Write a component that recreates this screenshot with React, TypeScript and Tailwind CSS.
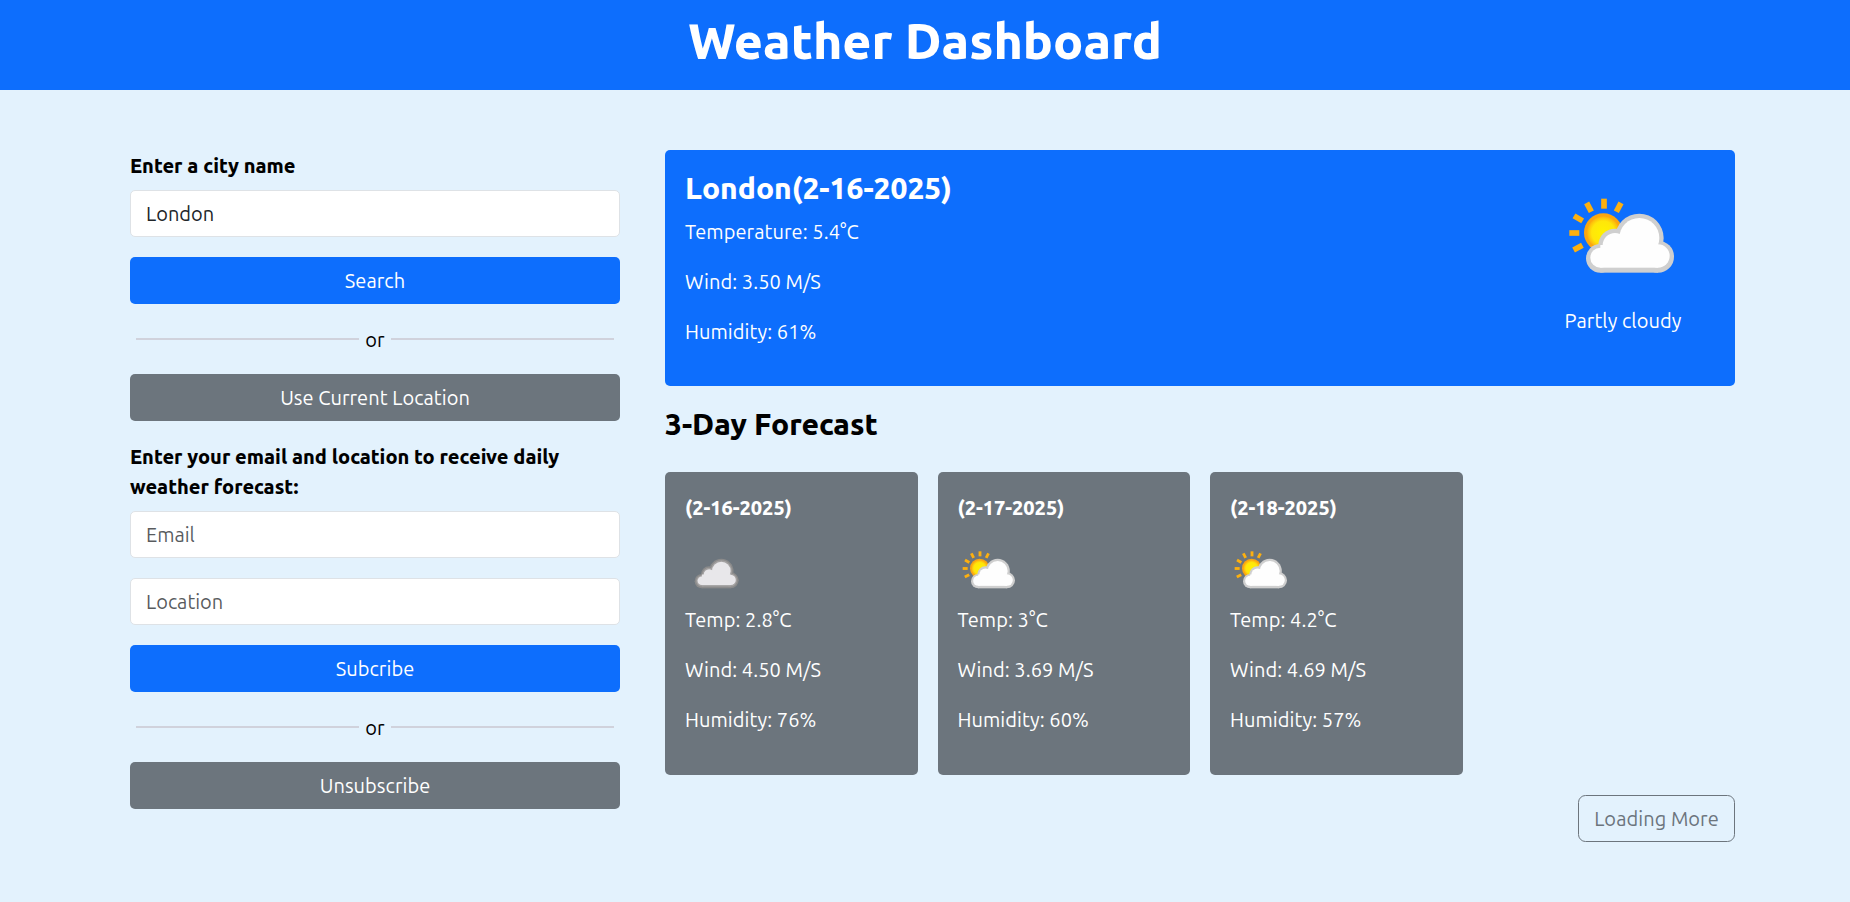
type Sky = "cloudy" | "partly";

function CloudShape({ inset, fill }: { inset: number; fill: string }) {
  const bottom = 248 - inset * 1.15;
  const lobe = 43 - inset;
  return (
    <g fill={fill}>
      <circle cx="121" cy={bottom - lobe} r={lobe} />
      <circle cx="165" cy="166" r={50 - inset} />
      <circle cx="238" cy="144" r={73 - inset} />
      <circle cx="294" cy={bottom - lobe - 5} r={lobe + 5} />
      <rect x="121" y="165" width="173" height={bottom - 165} />
    </g>
  );
}

const rays = [
  [132, 41, 0],
  [87, 52, -28],
  [176, 52, 28],
  [55, 85, -60],
  [43, 129, -90],
  [54, 173, -118],
];

function WeatherIcon({ sky, className }: { sky: Sky; className: string }) {
  return (
    <svg viewBox="0 -54 384 384" className={className} aria-hidden="true">
      {sky === "partly" ? (
        <>
          <defs>
            <radialGradient id="sun">
              <stop offset="0" stopColor="#fff200" />
              <stop offset="0.6" stopColor="#ffe60a" />
              <stop offset="0.78" stopColor="#fdc00d" />
              <stop offset="0.86" stopColor="#fba60f" />
              <stop offset="1" stopColor="#fba60f" />
            </radialGradient>
          </defs>
          <g fill="#fdb00f">
            {rays.map(([x, y, angle]) => (
              <rect key={angle} x={x - 8.5} y={y - 15} width="17" height="30" transform={`rotate(${angle} ${x} ${y})`} />
            ))}
          </g>
          <circle cx="130" cy="128" r="58" fill="url(#sun)" />
          <CloudShape inset={0} fill="#cfcfcf" />
          <CloudShape inset={13} fill="#fefefe" />
        </>
      ) : (
        <g transform="translate(-20 0)">
          <CloudShape inset={0} fill="#8b8b8b" />
          <CloudShape inset={9} fill="#a3a1a1" />
          <CloudShape inset={17} fill="#e8e7ea" />
        </g>
      )}
    </svg>
  );
}

function Button({ color, children }: { color: string; children: string }) {
  return <button className={`block h-[47px] w-full rounded-[5px] text-center leading-[30px] tracking-[0.05px] text-white ${color}`}>{children}</button>;
}

function Divider() {
  return (
    <div className="flex h-[70px] items-center px-[6px]">
      <div className="h-0.5 flex-1 bg-[#d0d2dc]" />
      <span className="px-[6px] pt-0.5">or</span>
      <div className="h-0.5 flex-1 bg-[#d0d2dc]" />
    </div>
  );
}

const inputClass =
  "block h-[47px] w-full rounded-[5px] border border-[#dee2e6] bg-white px-[15px] text-[#212529] placeholder:text-[#212529]/75 outline-none";

const forecast: { date: string; sky: Sky; temp: string; wind: string; humidity: string }[] = [
  { date: "2-16-2025", sky: "cloudy", temp: "2.8", wind: "4.50", humidity: "76" },
  { date: "2-17-2025", sky: "partly", temp: "3", wind: "3.69", humidity: "60" },
  { date: "2-18-2025", sky: "partly", temp: "4.2", wind: "4.69", humidity: "57" },
];

export default function App() {
  return (
    <div className="min-h-screen bg-[#e3f2fd] font-[Ubuntu,'Noto_Sans',sans-serif] text-[20px] leading-[30px] text-black">
      <header className="h-[90px] bg-[#0d6efd] pt-[10px] text-center text-white">
        <h1 className="text-[50px] leading-[60px] font-extrabold">Weather Dashboard</h1>
      </header>
      <main className="flex gap-[45px] pt-[60px] pr-[115px] pl-[130px]">
        <section className="w-[490px]">
          <label className="mb-[9px] block pt-px font-extrabold">Enter a city name</label>
          <input className={inputClass} defaultValue="London" />
          <div className="mt-5">
            <Button color="bg-[#0d6efd]">Search</Button>
          </div>
          <Divider />
          <Button color="bg-[#6c757d]">Use Current Location</Button>
          <label className="mt-5 mb-[9px] block pt-px font-extrabold">Enter your email and location to receive daily weather forecast:</label>
          <div className="flex flex-col gap-5">
            <input className={inputClass} placeholder="Email" />
            <input className={inputClass} placeholder="Location" />
            <Button color="bg-[#0d6efd]">Subcribe</Button>
          </div>
          <Divider />
          <Button color="bg-[#6c757d]">Unsubscribe</Button>
        </section>
        <section className="flex-1 tracking-[0.07px]">
          <div className="flex h-[236px] justify-between rounded-[5px] bg-[#0d6efd] p-5 text-white">
            <div>
              <h2 className="mb-[11px] text-[30px] leading-[36px] font-extrabold tracking-normal">London(2-16-2025)</h2>
              <p className="mb-5">Temperature: 5.4°C</p>
              <p className="mb-5">Wind: 3.50 M/S</p>
              <p>Humidity: 61%</p>
            </div>
            <div className="mr-[27px] flex w-[128px] flex-col items-center pt-[2px]">
              <WeatherIcon sky="partly" className="size-32" />
              <p className="mt-[6px] mr-0.5 whitespace-nowrap">Partly cloudy</p>
            </div>
          </div>
          <h2 className="mt-5 mb-[30px] text-[30px] leading-[36px] font-extrabold tracking-normal">3-Day Forecast</h2>
          <div className="grid grid-cols-4 gap-5">
            {forecast.map((day) => (
              <article key={day.date} className="h-[303px] rounded-[5px] bg-[#6c757d] p-5 text-white">
                <h3 className="pt-px font-extrabold tracking-normal">({day.date})</h3>
                <WeatherIcon sky={day.sky} className="mt-[14.5px] size-16" />
                <p className="mt-[3.5px] mb-5">Temp: {day.temp}°C</p>
                <p className="mb-5">Wind: {day.wind} M/S</p>
                <p>Humidity: {day.humidity}%</p>
              </article>
            ))}
          </div>
          <div className="mt-5 flex justify-end">
            <button className="h-[47px] w-[157px] rounded-[7.5px] border border-[#6c757d] text-center text-[#6c757d]">Loading More</button>
          </div>
        </section>
      </main>
    </div>
  );
}
